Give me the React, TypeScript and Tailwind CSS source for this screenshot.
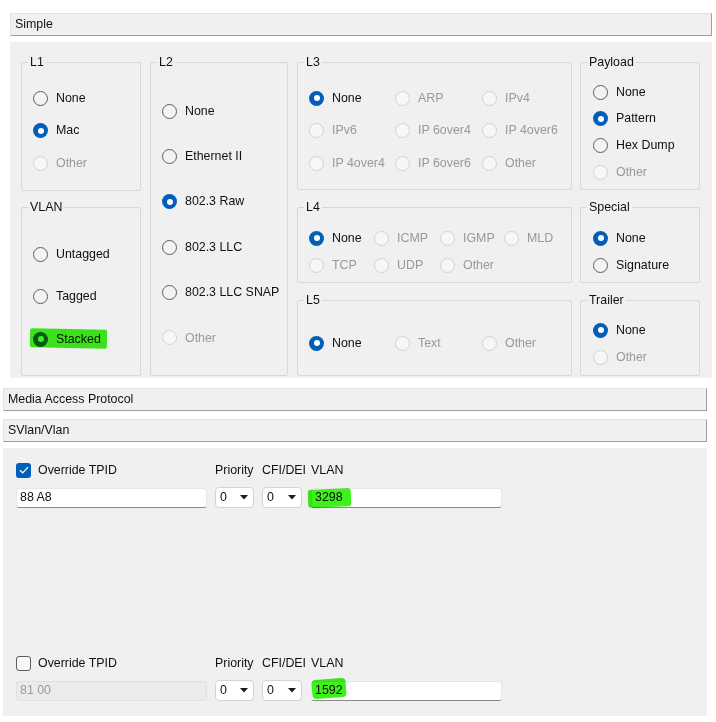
import React from "react";

type RState = "on" | "off" | "dis";

function Radio({ state, label, hl }: { state: RState; label: string; hl?: string }) {
  return (
    <div className="relative flex items-center h-[16px] whitespace-nowrap">
      {state === "on" ? (
        <span className="w-[15px] h-[15px] shrink-0 rounded-full bg-[#005fb8] flex items-center justify-center">
          <span className="w-[6px] h-[6px] rounded-full bg-white" />
        </span>
      ) : state === "off" ? (
        <span className="w-[15px] h-[15px] shrink-0 rounded-full border border-[#5d5d5d] bg-[#f3f3f3]" />
      ) : (
        <span className="w-[15px] h-[15px] shrink-0 rounded-full border border-[#d2d2d2] bg-[#f7f7f7]" />
      )}
      <span className={"ml-[8px] " + (state === "dis" ? "text-[#999999]" : "text-[#111111]")}>{label}</span>
      {hl ? <span className={hl} /> : null}
    </div>
  );
}

function Group({ title, className, children }: { title: string; className: string; children?: React.ReactNode }) {
  return (
    <div className={"relative border border-[#d8d8d8] rounded-[2px] " + className}>
      <span className="absolute top-[-8px] left-[6px] px-[2px] bg-[#f0f0f0] leading-[14px] text-[#111111]">{title}</span>
      {children}
    </div>
  );
}

function Bar({ text, w }: { text: string; w: string }) {
  return (
    <div className={"h-[23px] bg-[#f0f0f0] border border-[#e2e2e2] border-b-[#9e9e9e] border-r-[#9e9e9e] flex items-center pl-[4px] text-[#111111] " + w}>
      {text}
    </div>
  );
}

function Arrow() {
  return (
    <svg width="8" height="5" viewBox="0 0 8 5" className="shrink-0">
      <path d="M0 0 L8 0 L4 4.5 Z" fill="#1b1b1b" />
    </svg>
  );
}

function Select() {
  return (
    <div className="h-[21px] bg-white border border-[#d4d4d4] rounded-[4px] flex items-center justify-between pl-[4px] pr-[5px]">
      <span>0</span>
      <Arrow />
    </div>
  );
}

function CheckBox({ checked }: { checked: boolean }) {
  return checked ? (
    <span className="w-[15px] h-[15px] rounded-[3px] bg-[#005fb8] flex items-center justify-center">
      <svg width="10" height="8" viewBox="0 0 10 8">
        <path d="M1 4.2 L3.7 6.8 L9 1.2" fill="none" stroke="white" strokeWidth="1.2" />
      </svg>
    </span>
  ) : (
    <span className="w-[15px] h-[15px] rounded-[3px] border border-[#5d5d5d] bg-[#f7f7f7]" />
  );
}

function VlanBlock({ checked, tpid, vlan, hl }: { checked: boolean; tpid: string; vlan: string; hl: string }) {
  return (
    <div className="grid grid-cols-[199px_47px_49px_191px] grid-rows-[16px_21px] gap-y-[9px] items-center">
      <div className="flex items-center">
        <CheckBox checked={checked} />
        <span className="ml-[7px]">Override TPID</span>
      </div>
      <div>Priority</div>
      <div>CFI/DEI</div>
      <div>VLAN</div>
      {checked ? (
        <div className="w-[191px] h-[20px] bg-white border border-[#e6e6e6] border-b-[#8a8a8a] rounded-[3px] flex items-center pl-[3px]">
          {tpid}
        </div>
      ) : (
        <div className="w-[191px] h-[20px] bg-[#ebebeb] border border-[#e0e0e0] rounded-[3px] flex items-center pl-[3px] text-[#9a9a9a]">
          {tpid}
        </div>
      )}
      <div className="w-[39px]">
        <Select />
      </div>
      <div className="w-[40px]">
        <Select />
      </div>
      <div className="relative w-[191px] h-[20px] bg-white border border-[#e6e6e6] border-b-[#8a8a8a] rounded-[3px] flex items-center pl-[3px]">
        <span className="relative">{vlan}</span>
        <span className={hl} />
      </div>
    </div>
  );
}

export default function App() {
  return (
    <div className="w-[716px] h-[722px] bg-white overflow-hidden text-[12.4px] text-[#111111] font-['Liberation_Sans',Arial,sans-serif]">
      {/* Simple section */}
      <div className="pt-[13px] pl-[10px]">
        <Bar text="Simple" w="w-[702px]" />
        <div className="mt-[6px] w-[702px] h-[336px] bg-[#f0f0f0] pt-[20px] pl-[11px] flex">
          {/* col 1 */}
          <div className="w-[120px] flex flex-col gap-[16px]">
            <Group title="L1" className="h-[129px] pl-[11px] pt-[27px]">
              <div className="flex flex-col gap-[16.5px]">
                <Radio state="off" label="None" />
                <Radio state="on" label="Mac" />
                <Radio state="dis" label="Other" />
              </div>
            </Group>
            <Group title="VLAN" className="h-[169px] pl-[11px] pt-[38px]">
              <div className="flex flex-col gap-[26.5px]">
                <Radio state="off" label="Untagged" />
                <Radio state="off" label="Tagged" />
                <Radio
                  state="on"
                  label="Stacked"
                  hl="absolute left-[-3px] top-[-2px] w-[77px] h-[19px] bg-[#3ef01c] mix-blend-multiply rounded-[2px] rotate-[1deg]"
                />
              </div>
            </Group>
          </div>
          {/* col 2 */}
          <div className="ml-[9px] w-[138px]">
            <Group title="L2" className="h-[314px] pl-[11px] pt-[40px]">
              <div className="flex flex-col gap-[29.4px]">
                <Radio state="off" label="None" />
                <Radio state="off" label="Ethernet II" />
                <Radio state="on" label="802.3 Raw" />
                <Radio state="off" label="802.3 LLC" />
                <Radio state="off" label="802.3 LLC SNAP" />
                <Radio state="dis" label="Other" />
              </div>
            </Group>
          </div>
          {/* col 3 */}
          <div className="ml-[9px] w-[275px] flex flex-col gap-[17px]">
            <Group title="L3" className="h-[128px] pl-[11px] pt-[27px]">
              <div className="grid grid-cols-[86px_87px_auto] gap-y-[16.5px]">
                <Radio state="on" label="None" />
                <Radio state="dis" label="ARP" />
                <Radio state="dis" label="IPv4" />
                <Radio state="dis" label="IPv6" />
                <Radio state="dis" label="IP 6over4" />
                <Radio state="dis" label="IP 4over6" />
                <Radio state="dis" label="IP 4over4" />
                <Radio state="dis" label="IP 6over6" />
                <Radio state="dis" label="Other" />
              </div>
            </Group>
            <Group title="L4" className="h-[76px] pl-[11px] pt-[22px]">
              <div className="grid grid-cols-[65px_66px_64px_auto] gap-y-[11px]">
                <Radio state="on" label="None" />
                <Radio state="dis" label="ICMP" />
                <Radio state="dis" label="IGMP" />
                <Radio state="dis" label="MLD" />
                <Radio state="dis" label="TCP" />
                <Radio state="dis" label="UDP" />
                <Radio state="dis" label="Other" />
              </div>
            </Group>
            <Group title="L5" className="h-[76px] pl-[11px] pt-[34px]">
              <div className="grid grid-cols-[86px_87px_auto]">
                <Radio state="on" label="None" />
                <Radio state="dis" label="Text" />
                <Radio state="dis" label="Other" />
              </div>
            </Group>
          </div>
          {/* col 4 */}
          <div className="ml-[8px] w-[120px] flex flex-col gap-[17px]">
            <Group title="Payload" className="h-[128px] pl-[12px] pt-[21px]">
              <div className="flex flex-col gap-[10.7px]">
                <Radio state="off" label="None" />
                <Radio state="on" label="Pattern" />
                <Radio state="off" label="Hex Dump" />
                <Radio state="dis" label="Other" />
              </div>
            </Group>
            <Group title="Special" className="h-[76px] pl-[12px] pt-[22px]">
              <div className="flex flex-col gap-[11px]">
                <Radio state="on" label="None" />
                <Radio state="off" label="Signature" />
              </div>
            </Group>
            <Group title="Trailer" className="h-[76px] pl-[12px] pt-[21px]">
              <div className="flex flex-col gap-[11px]">
                <Radio state="on" label="None" />
                <Radio state="dis" label="Other" />
              </div>
            </Group>
          </div>
        </div>
      </div>

      {/* MAP section */}
      <div className="mt-[10px] pl-[3px] flex flex-col">
        <Bar text="Media Access Protocol" w="w-[704px]" />
        <div className="mt-[8px]">
          <Bar text="SVlan/Vlan" w="w-[704px]" />
        </div>
        <div className="mt-[6px] w-[704px] h-[268px] bg-[#f0f0f0] pl-[13px] pt-[14px]">
          <VlanBlock
            checked={true}
            tpid="88 A8"
            vlan="3298"
            hl="absolute left-[-4px] top-[0px] w-[43px] h-[18px] bg-[#3ef01c] mix-blend-multiply rounded-[3px] -rotate-[2deg]"
          />
          <div className="mt-[147px]">
            <VlanBlock
              checked={false}
              tpid="81 00"
              vlan="1592"
              hl="absolute left-[0px] top-[-3px] w-[34px] h-[19px] bg-[#3ef01c] mix-blend-multiply rounded-[4px] -rotate-[4deg]"
            />
          </div>
        </div>
      </div>
    </div>
  );
}
